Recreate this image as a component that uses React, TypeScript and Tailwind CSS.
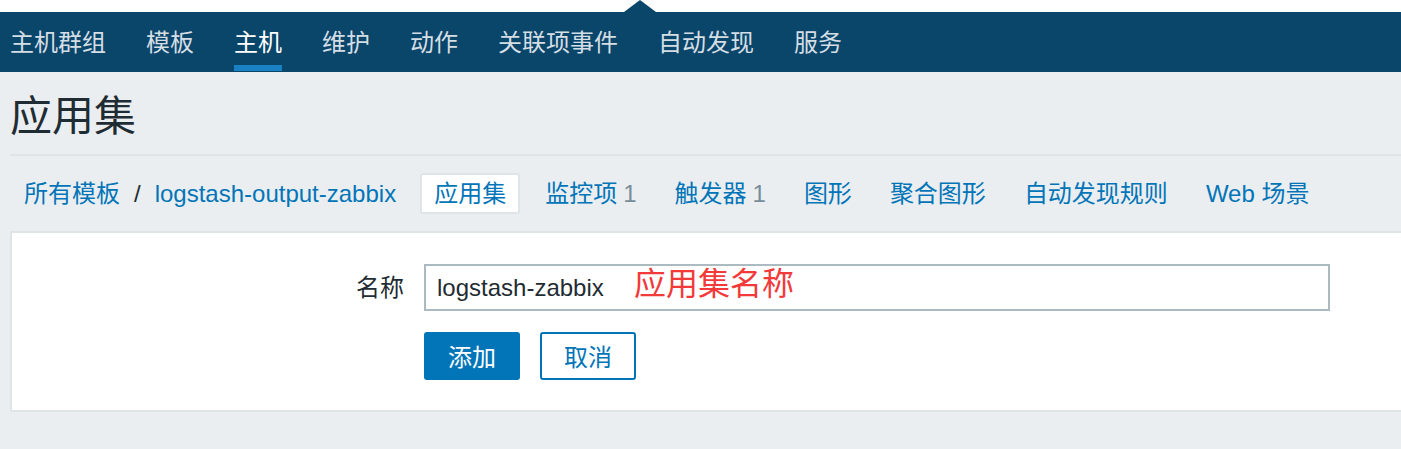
import React from 'react';

const navItems = ['主机群组', '模板', '主机', '维护', '动作', '关联项事件', '自动发现', '服务'];

const tabs: { label: string; count?: number; active?: boolean }[] = [
  { label: '应用集', active: true },
  { label: '监控项', count: 1 },
  { label: '触发器', count: 1 },
  { label: '图形' },
  { label: '聚合图形' },
  { label: '自动发现规则' },
  { label: 'Web 场景' },
];

export default function App() {
  return (
    <div className="w-full h-[449px] overflow-hidden bg-[#ebeef0] text-[#1f2c33] font-['Liberation_Sans','Noto_Sans_CJK_SC',sans-serif]">
      {/* top strip with pointer */}
      <div className="relative h-[12px] bg-white">
        <div className="absolute left-[624px] top-0 w-0 h-0 border-l-[16px] border-r-[16px] border-b-[12px] border-l-transparent border-r-transparent border-b-[#0a466a]" />
      </div>

      {/* main nav */}
      <nav className="h-[60px] bg-[#0a466a] flex items-end px-[10px] gap-[40px]">
        {navItems.map((item) => {
          const active = item === '主机';
          return (
            <div key={item} className="flex flex-col">
              <span className={`text-[24px] leading-[32px] whitespace-nowrap ${active ? 'text-white' : 'text-[#d5dee5]'}`}>
                {item}
              </span>
              <div className={`mt-[6px] mb-[1px] h-[6px] ${active ? 'bg-[#1a80c4]' : 'bg-transparent'}`} />
            </div>
          );
        })}
      </nav>

      {/* title */}
      <div className="h-[82px] pt-[8px] px-[10px] flex items-center">
        <h1 className="text-[42px] leading-[50px] font-normal">应用集</h1>
      </div>
      <div className="ml-[10px] h-[2px] bg-[#dfe4e7]" />

      {/* breadcrumbs + tabs */}
      <div className="flex items-center py-[17px] pl-[24px] text-[24px] leading-[28px] whitespace-nowrap">
        <span className="text-[#0275b8]">所有模板</span>
        <span className="mx-[14px]">/</span>
        <span className="text-[#0275b8]">logstash-output-zabbix</span>
        <div className="flex items-center gap-[12px] ml-[24px]">
          {tabs.map((t) =>
            t.active ? (
              <div
                key={t.label}
                className="h-[41px] flex items-center px-[12px] bg-white border-2 border-[#dfe4e7] rounded-[3px] text-[#0275b8]"
              >
                {t.label}
              </div>
            ) : (
              <div key={t.label} className="h-[41px] flex items-center px-[13px] text-[#0275b8]">
                {t.label}
                {t.count !== undefined && <span className="ml-[6px] text-[#768d99]">{t.count}</span>}
              </div>
            )
          )}
        </div>
      </div>

      {/* form */}
      <div className="ml-[10px] bg-white border-l-2 border-t-2 border-b-2 border-[#dfe4e7] pt-[31px] pb-[30px]">
        <div className="flex items-center">
          <label className="w-[392px] text-right text-[24px] leading-[28px]">名称</label>
          <div className="relative ml-[20px] w-[906px] h-[47px] border-2 border-[#acbbc2] flex items-center pl-[11px] text-[24px]">
            logstash-zabbix
            <span className="absolute left-[208px] top-[-2px] text-[32px] leading-[40px] text-[#f23a3a] font-['Liberation_Serif','Noto_Sans_CJK_SC',serif]">
              应用集名称
            </span>
          </div>
        </div>
        <div className="flex gap-[20px] mt-[21px] ml-[412px]">
          <button className="w-[96px] h-[48px] pt-[3px] bg-[#0275b8] text-white text-[24px] rounded-[3px]">添加</button>
          <button className="w-[96px] h-[48px] pt-[3px] bg-white border-2 border-[#0275b8] text-[#0275b8] text-[24px] rounded-[3px]">
            取消
          </button>
        </div>
      </div>
    </div>
  );
}
